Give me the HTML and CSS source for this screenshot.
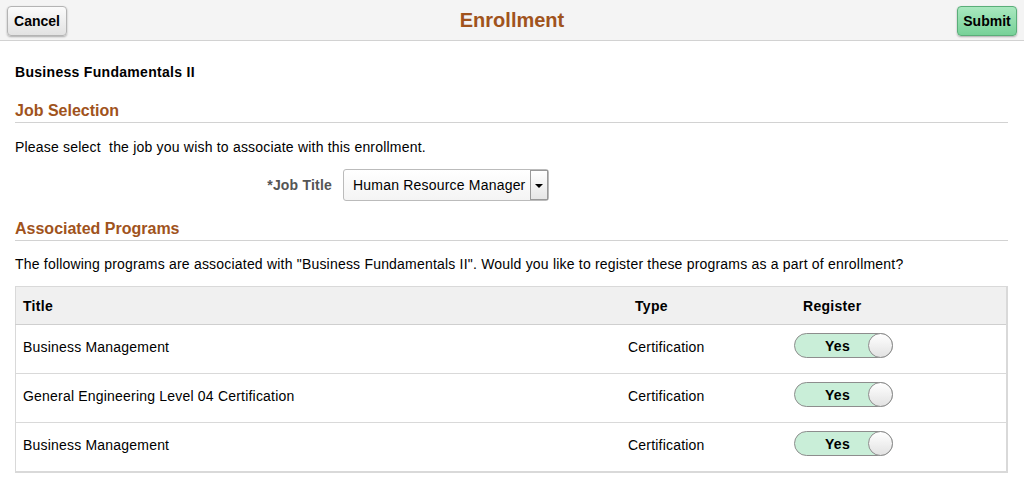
FILE: index.html
```html
<!DOCTYPE html>
<html lang="en">
<head>
    <meta charset="UTF-8">
    <title>Enrollment</title>
    <link rel="stylesheet" href="styles.css">
</head>
<body>
    <header class="banner">
        <button class="btn">Cancel</button>
        <h1>Enrollment</h1>
        <button class="btn btn-primary">Submit</button>
    </header>

    <main class="page">
        <div class="course">Business Fundamentals II</div>

        <h2 class="section">Job Selection</h2>
        <p class="note note-first">Please select&nbsp; the job you wish to associate with this enrollment.</p>
        <div class="field">
            <label class="field-label">*Job Title</label>
            <div class="select">
                <span class="select-value">Human Resource Manager</span>
                <span class="select-arrow"></span>
            </div>
        </div>

        <h2 class="section">Associated Programs</h2>
        <p class="note">The following programs are associated with "Business Fundamentals II". Would you like to register these programs as a part of enrollment?</p>

        <table class="grid">
            <thead>
                <tr>
                    <th class="col-title">Title</th>
                    <th class="col-type">Type</th>
                    <th class="col-reg">Register</th>
                </tr>
            </thead>
            <tbody>
                <tr>
                    <td>Business Management</td>
                    <td class="col-type">Certification</td>
                    <td class="col-reg"><span class="toggle"><span class="toggle-text">Yes</span><span class="knob"></span></span></td>
                </tr>
                <tr>
                    <td>General Engineering Level 04 Certification</td>
                    <td class="col-type">Certification</td>
                    <td class="col-reg"><span class="toggle"><span class="toggle-text">Yes</span><span class="knob"></span></span></td>
                </tr>
                <tr>
                    <td>Business Management</td>
                    <td class="col-type">Certification</td>
                    <td class="col-reg"><span class="toggle"><span class="toggle-text">Yes</span><span class="knob"></span></span></td>
                </tr>
            </tbody>
        </table>
    </main>
</body>
</html>
```

FILE: styles.css
```css
body {
    margin: 0;
    font-family: Arial, "Liberation Sans", sans-serif;
    font-size: 14px;
    letter-spacing: 0.2px;
    color: #000;
    background-color: #fff;
}
.banner {
    display: flex;
    align-items: center;
    justify-content: space-between;
    height: 41px;
    padding: 0 7px;
    background-color: #f4f4f4;
    border-bottom: 1px solid #d2d2d2;
    box-sizing: border-box;
}
.banner h1 {
    margin: 0;
    font-size: 20px;
    font-weight: bold;
    letter-spacing: 0;
    color: #a0531c;
}
.btn {
    height: 30px;
    width: 60px;
    padding: 0;
    font-family: Arial, "Liberation Sans", sans-serif;
    font-size: 14px;
    font-weight: bold;
    color: #000;
    background: linear-gradient(#fbfbfb, #e2e2e2);
    border: 1px solid #b4b4b4;
    border-radius: 4px;
    box-shadow: 0 1px 2px rgba(0, 0, 0, 0.3);
    margin-top: 1px;
}
.btn-primary {
    background: linear-gradient(#a9e8bf, #77d198);
    border-color: #5aae79;
}
.page {
    padding: 0 16px 0 15px;
}
.course {
    font-weight: bold;
    letter-spacing: 0.3px;
    margin-top: 23px;
    line-height: 16px;
}
.section {
    margin: 22px 0 0;
    padding-bottom: 2px;
    font-size: 16px;
    line-height: 18px;
    letter-spacing: 0;
    color: #a0531c;
    border-bottom: 1px solid #d2d2d2;
}
.note {
    margin: 15px 0 0;
    line-height: 16px;
}
.note-first {
    margin-top: 16px;
    margin-bottom: -1px;
}
.field {
    display: flex;
    align-items: center;
    margin-top: 15px;
}
.field + .section {
    margin-top: 19px;
}
.field-label {
    width: 317px;
    text-align: right;
    font-weight: bold;
    color: #555;
    padding-right: 11px;
}
.select {
    display: flex;
    align-items: stretch;
    height: 32px;
    width: 206px;
    box-sizing: border-box;
    border: 1px solid #bbb;
    border-radius: 3px;
    background: linear-gradient(#fff, #f4f4f4);
}
.select-value {
    flex: 1;
    padding-left: 9px;
    line-height: 30px;
    white-space: nowrap;
}
.select-arrow {
    width: 16px;
    border: 1px solid #999;
    background: linear-gradient(#fff, #e6e6e6);
    position: relative;
}
.select-arrow::after {
    content: "";
    position: absolute;
    left: 4px;
    top: 13px;
    border-left: 4px solid transparent;
    border-right: 4px solid transparent;
    border-top: 4px solid #000;
}
.grid {
    width: 100%;
    margin-top: 14px;
    border-collapse: collapse;
    border: 2px solid #d9d9d9;
    border-top-width: 1px;
    border-left-width: 1px;
}
.grid th {
    height: 37px;
    background-color: #f0f0f0;
    text-align: left;
    font-weight: bold;
    letter-spacing: 0.3px;
    padding: 0 7px;
    border-bottom: 1px solid #cfcfcf;
}
.grid td {
    height: 44px;
    padding: 0 7px 4px;
    border-bottom: 1px solid #d9d9d9;
}
.grid th.col-type {
    width: 123px;
    padding-left: 15px;
}
.grid td.col-type {
    padding-left: 8px;
}
.grid th.col-reg {
    width: 196px;
    padding-left: 38px;
}
.grid td.col-reg {
    padding-left: 0;
}
.toggle {
    display: inline-flex;
    align-items: center;
    position: relative;
    width: 99px;
    height: 25px;
    box-sizing: border-box;
    margin-left: 29px;
    margin-top: -3px;
    border: 1px solid #8d8d8d;
    border-radius: 13px;
    background-color: #c9eed8;
}
.toggle-text {
    flex: 1;
    text-align: center;
    font-weight: bold;
    letter-spacing: 0.3px;
    padding-right: 12px;
}
.knob {
    position: absolute;
    right: -1px;
    top: -1px;
    width: 25px;
    height: 25px;
    box-sizing: border-box;
    border: 1px solid #8d8d8d;
    border-radius: 50%;
    background: linear-gradient(#fff, #e2e2e2);
}
```
